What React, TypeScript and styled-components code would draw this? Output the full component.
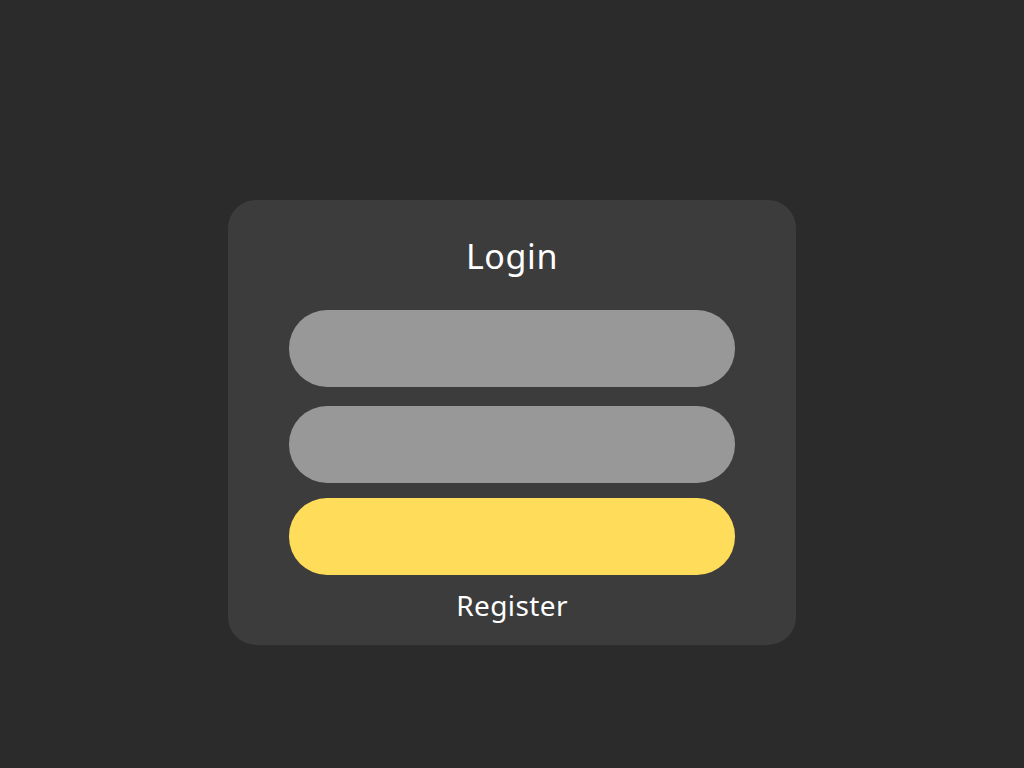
import React from "react";
import styled, { createGlobalStyle } from "styled-components";

const Global = createGlobalStyle`
  html, body { margin: 0; padding: 0; background: #2b2b2b; }
  body { font-family: "Noto Sans", "Open Sans", sans-serif; }
`;

const Page = styled.div`
  width: 1024px;
  height: 768px;
  display: flex;
  justify-content: center;
  align-items: flex-start;
  padding-top: 200px;
  box-sizing: border-box;
`;

const Card = styled.div`
  width: 568px;
  height: 445px;
  box-sizing: border-box;
  background: #3c3c3c;
  border-radius: 28px;
  padding: 36px 61px 0;
  display: flex;
  flex-direction: column;
  align-items: stretch;
`;

const Title = styled.h1`
  margin: 0 0 34px;
  font-size: 34px;
  line-height: 40px;
  font-weight: 400;
  letter-spacing: 0.6px;
  color: #ffffff;
  text-align: center;
`;

const Field = styled.div<{ $gap: number }>`
  height: 77px;
  border-radius: 38px;
  background: #989898;
  margin-bottom: ${(p) => p.$gap}px;
`;

const Submit = styled.div`
  height: 77px;
  border-radius: 38px;
  background: #ffdd5a;
  margin-bottom: 13px;
`;

const RegisterLink = styled.div`
  font-size: 28px;
  line-height: 34px;
  letter-spacing: 0.4px;
  color: #ffffff;
  text-align: center;
`;

export default function App() {
  return (
    <>
      <Global />
      <Page>
        <Card>
          <Title>Login</Title>
          <Field $gap={19} />
          <Field $gap={15} />
          <Submit />
          <RegisterLink>Register</RegisterLink>
        </Card>
      </Page>
    </>
  );
}
